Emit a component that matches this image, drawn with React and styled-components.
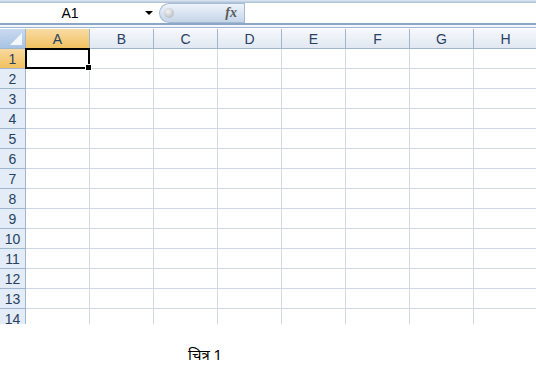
import React from "react";
import styled, { createGlobalStyle } from "styled-components";

const GlobalStyle = createGlobalStyle`
  body {
    margin: 0;
    background: #ffffff;
    font-family: "Liberation Sans", Arial, sans-serif;
  }
`;

const COLS = ["A", "B", "C", "D", "E", "F", "G", "H"];
const ROWS = Array.from({ length: 14 }, (_, i) => i + 1);

const Page = styled.div`
  width: 536px;
  height: 373px;
  overflow: hidden;
  display: flex;
  flex-direction: column;
`;

const TopStrip = styled.div`
  height: 3px;
  background: linear-gradient(#dfe8f3, #a9bfd6);
`;

const FormulaBar = styled.div`
  height: 20px;
  display: flex;
  align-items: center;
  background: #ffffff;
`;

const NameBox = styled.div`
  width: 157px;
  height: 20px;
  display: flex;
  align-items: center;
  font-size: 14px;
  color: #000;
`;

const NameText = styled.span`
  width: 140px;
  text-align: center;
`;

const DropArrow = styled.span`
  width: 0;
  height: 0;
  border-left: 4px solid transparent;
  border-right: 4px solid transparent;
  border-top: 4px solid #000;
  margin-left: 5px;
`;

const Pill = styled.div`
  width: 85px;
  height: 20px;
  margin-left: 2px;
  border-radius: 11px 0 0 11px;
  background: linear-gradient(#eef3fa, #c5d5e9);
  border: 1px solid #a5bbd4;
  border-right: none;
  box-sizing: border-box;
  display: flex;
  align-items: center;
  justify-content: space-between;
  padding: 0 7px 0 4px;
`;

const Knob = styled.span`
  width: 10px;
  height: 10px;
  border-radius: 50%;
  background: radial-gradient(circle at 40% 35%, #f4f4f4, #a8adb3);
`;

const Fx = styled.span`
  font-family: "Liberation Serif", "Times New Roman", serif;
  font-style: italic;
  font-weight: bold;
  font-size: 14px;
  color: #5a5a5a;
`;

const FormulaInput = styled.div`
  flex: 1;
  height: 20px;
  border-left: 1px solid #a5bbd4;
  background: #fff;
`;

const Separator = styled.div`
  height: 2px;
  border-top: 2px solid #8ba6c6;
  border-bottom: 1px solid #9fb7d2;
  background: #f3f6fa;
  margin-bottom: 1px;
`;

const Grid = styled.div`
  display: grid;
  grid-template-columns: 26px repeat(8, 64px);
  grid-auto-rows: 20px;
  height: 295px;
  overflow: hidden;
`;

const Corner = styled.div`
  background: linear-gradient(#c9daf0, #a9c3e5);
  border-right: 1px solid #9eb6ce;
  border-bottom: 1px solid #9eb6ce;
  box-sizing: border-box;
  position: relative;
  &::after {
    content: "";
    position: absolute;
    right: 3px;
    bottom: 3px;
    width: 0;
    height: 0;
    border-left: 12px solid transparent;
    border-bottom: 12px solid #ffffff;
    opacity: 0.85;
  }
`;

const ColHeader = styled.div`
  display: flex;
  align-items: center;
  justify-content: center;
  font-size: 14px;
  color: #27415f;
  box-sizing: border-box;
  border-right: 1px solid #9eb6ce;
  border-bottom: 1px solid ${(p) => (p.$active ? "#f2a93b" : "#9eb6ce")};
  background: ${(p) =>
    p.$active
      ? "linear-gradient(#f9dba4, #f1c15f)"
      : "linear-gradient(#f6f8fc, #e1e8f2)"};
`;

const RowHeader = styled.div`
  display: flex;
  align-items: center;
  justify-content: center;
  font-size: 14px;
  color: #27415f;
  box-sizing: border-box;
  border-right: 1px solid ${(p) => (p.$active ? "#f2a93b" : "#9eb6ce")};
  border-bottom: 1px solid #9eb6ce;
  background: ${(p) => (p.$active ? "linear-gradient(#f9d99f, #f1c15f)" : "#e4ecf7")};
`;

const Cell = styled.div`
  box-sizing: border-box;
  border-right: 1px solid #d0d7e5;
  border-bottom: 1px solid #d0d7e5;
  background: #fff;
  position: relative;
  ${(p) =>
    p.$selected &&
    `
    border: 2px solid #000;
    margin: -1px 0 0 -1px;
    z-index: 2;
  `}
`;

const Handle = styled.span`
  position: absolute;
  right: -4px;
  bottom: -4px;
  width: 5px;
  height: 5px;
  background: #000;
  border: 1px solid #fff;
`;

const Caption = styled.div`
  padding: 20px 0 0 188px;
  font-family: "Noto Sans", "Lohit Devanagari", "Noto Sans Devanagari", sans-serif;
  font-size: 15px;
  color: #000;
`;

export default function App() {
  return (
    <>
      <GlobalStyle />
      <Page>
        <TopStrip />
        <FormulaBar>
          <NameBox>
            <NameText>A1</NameText>
            <DropArrow />
          </NameBox>
          <Pill>
            <Knob />
            <Fx>fx</Fx>
          </Pill>
          <FormulaInput />
        </FormulaBar>
        <Separator />
        <Grid>
          <Corner />
          {COLS.map((c) => (
            <ColHeader key={c} $active={c === "A"}>
              {c}
            </ColHeader>
          ))}
          {ROWS.map((r) => (
            <React.Fragment key={r}>
              <RowHeader $active={r === 1}>{r}</RowHeader>
              {COLS.map((c) => {
                const sel = r === 1 && c === "A";
                return (
                  <Cell key={c} $selected={sel}>
                    {sel && <Handle />}
                  </Cell>
                );
              })}
            </React.Fragment>
          ))}
        </Grid>
        <Caption>चित्र 1</Caption>
      </Page>
    </>
  );
}
